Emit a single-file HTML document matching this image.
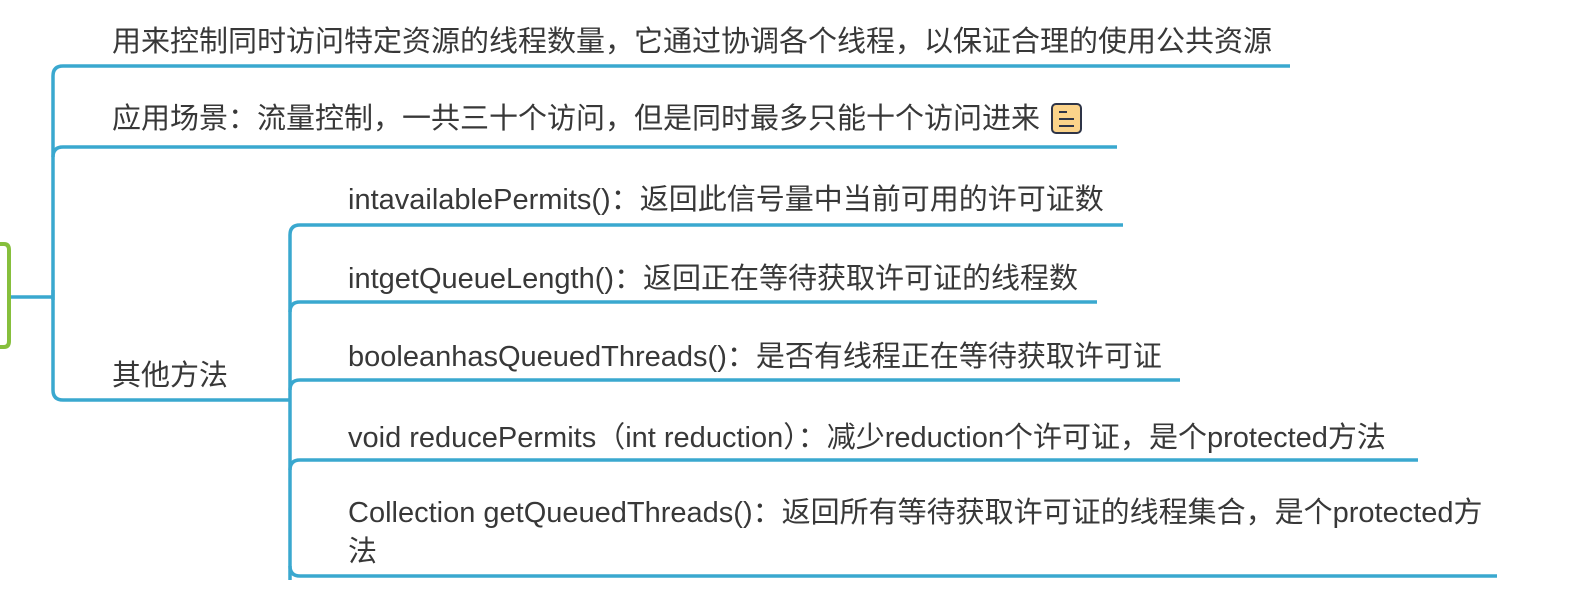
<!DOCTYPE html>
<html><head><meta charset="utf-8"><style>
body{margin:0;width:1589px;height:612px;background:#fff;position:relative;overflow:hidden;font-family:"Liberation Sans","Noto Sans CJK SC",sans-serif;color:#383838;}
.t{position:absolute;font-size:29px;line-height:34px;white-space:nowrap;}
</style></head><body>
<svg width="1589" height="612" style="position:absolute;left:0;top:0" fill="none">
<g stroke="#3aa8cf" stroke-width="3.5">
<path d="M53 300 V76 Q53 66 63 66 H1290"/>
<path d="M53 157 Q53 147 63 147 H1117"/>
<path d="M53 290 V390 Q53 400 63 400 H290"/>
<path d="M10 297 H53"/>
<path d="M290 580 V235 Q290 225 300 225 H1123"/>
<path d="M290 312 Q290 302 300 302 H1097"/>
<path d="M290 390 Q290 380 300 380 H1180"/>
<path d="M290 470 Q290 460 300 460 H1418"/>
<path d="M290 566 Q290 576 300 576 H1497"/>
</g>
<path d="M0 244 H4 Q9 244 9 250 V341 Q9 347 4 347 H0" stroke="#86bf3c" stroke-width="4"/>
<rect x="1052" y="104" width="29" height="29" rx="4" fill="#fbd38a" stroke="#2e3447" stroke-width="2"/>
<path d="M1059 112 H1067 M1059 119 H1074 M1059 126 H1074" stroke="#2e3447" stroke-width="2"/>
</svg>
<div class="t" style="left:112px;top:25px">用来控制同时访问特定资源的线程数量，它通过协调各个线程，以保证合理的使用公共资源</div>
<div class="t" style="left:112px;top:102px">应用场景：流量控制，一共三十个访问，但是同时最多只能十个访问进来</div>
<div class="t" style="left:112px;top:359px">其他方法</div>
<div class="t" style="left:348px;top:183px">intavailablePermits()：返回此信号量中当前可用的许可证数</div>
<div class="t" style="left:348px;top:262px">intgetQueueLength()：返回正在等待获取许可证的线程数</div>
<div class="t" style="left:348px;top:340px">booleanhasQueuedThreads()：是否有线程正在等待获取许可证</div>
<div class="t" style="left:348px;top:421px">void reducePermits（int reduction）：减少reduction个许可证，是个protected方法</div>
<div class="t" style="left:348px;top:496px">Collection getQueuedThreads()：返回所有等待获取许可证的线程集合，是个protected方</div>
<div class="t" style="left:348px;top:535px">法</div>
</body></html>
